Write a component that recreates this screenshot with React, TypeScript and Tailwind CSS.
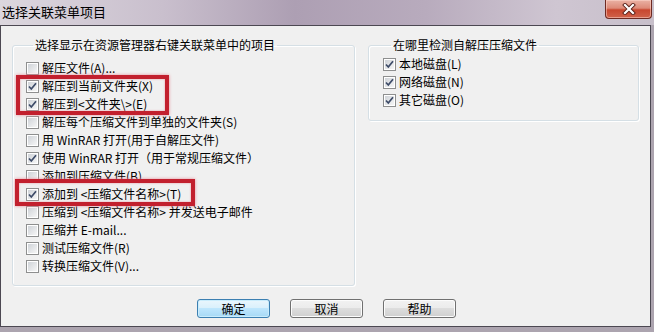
import React from "react";

type Item = { label: string; checked: boolean };

const leftItems: Item[] = [
  { label: "解压文件(A)...", checked: false },
  { label: "解压到当前文件夹(X)", checked: true },
  { label: "解压到<文件夹\\>(E)", checked: true },
  { label: "解压每个压缩文件到单独的文件夹(S)", checked: false },
  { label: "用 WinRAR 打开(用于自解压文件)", checked: false },
  { label: "使用 WinRAR 打开（用于常规压缩文件）", checked: true },
  { label: "添加到压缩文件(B)...", checked: false },
  { label: "添加到 <压缩文件名称>(T)", checked: true },
  { label: "压缩到 <压缩文件名称> 并发送电子邮件", checked: false },
  { label: "压缩并 E-mail...", checked: false },
  { label: "测试压缩文件(R)", checked: false },
  { label: "转换压缩文件(V)...", checked: false },
];

const rightItems: Item[] = [
  { label: "本地磁盘(L)", checked: true },
  { label: "网络磁盘(N)", checked: true },
  { label: "其它磁盘(O)", checked: true },
];

function CheckBox({ checked }: { checked: boolean }) {
  return (
    <span className="relative flex h-[13px] w-[13px] shrink-0 items-center justify-center border border-[#8e8f8f] bg-white">
      <span className="h-[9px] w-[9px] bg-gradient-to-br from-[#cfd3d8] to-[#f6f6f6]" />
      {checked && (
        <svg className="absolute inset-0" width="11" height="11" viewBox="0 0 11 11">
          <path d="M2 5.5 L4.3 8 L9 2.2" fill="none" stroke="#3d4b68" strokeWidth="1.7" />
        </svg>
      )}
    </span>
  );
}

function Row({ item }: { item: Item }) {
  return (
    <div className="flex h-[18px] items-center gap-[3px] whitespace-pre text-[12px] text-black">
      <CheckBox checked={item.checked} />
      <span>{item.label}</span>
    </div>
  );
}

function Button({ label, primary }: { label: string; primary?: boolean }) {
  return (
    <button
      className={
        primary
          ? "flex h-[19px] w-[73px] items-center justify-center rounded-[3px] border border-[#3c7fb1] bg-[linear-gradient(#eaf6fd_0%,#d9f0fc_50%,#bee6fd_50%,#a7d9f5_100%)] text-[12px] text-black shadow-[inset_0_0_0_1px_#c9ecfc]"
          : "flex h-[19px] w-[73px] items-center justify-center rounded-[3px] border border-[#707070] bg-[linear-gradient(#f2f2f2_0%,#ebebeb_50%,#dddddd_50%,#cfcfcf_100%)] text-[12px] text-black shadow-[inset_0_0_0_1px_#fcfcfc]"
      }
    >
      {label}
    </button>
  );
}

export default function App() {
  return (
    <div
      className="flex h-[332px] w-[654px] flex-col overflow-hidden bg-[#aca4af]"
      style={{ fontFamily: '"Noto Sans CJK SC", "Noto Sans", sans-serif' }}
    >
      {/* title bar */}
      <div className="flex h-[25px] shrink-0 items-start justify-between bg-[linear-gradient(90deg,#dcd7de_0%,#c9bfcd_25%,#ad9fb3_45%,#b8abbd_65%,#cfc6d2_85%,#c7bfca_100%)]">
        <span className="pl-[2px] pt-[3px] text-[13px] leading-[18px] text-black">选择关联菜单项目</span>
        <div className="mr-[2px] flex h-[19px] w-[47px] items-center justify-center rounded-b-[4px] border border-t-0 border-[#6e2a22] bg-[linear-gradient(#eab2a4_0%,#dd8a78_45%,#c8472f_55%,#d0624a_100%)] shadow-[inset_0_0_0_1px_rgba(255,220,210,0.5)]">
          <svg width="14" height="12" viewBox="0 0 14 12">
            <path d="M3 2 L11 10 M11 2 L3 10" stroke="#5a2018" strokeWidth="4" strokeLinecap="square" />
            <path d="M3 2 L11 10 M11 2 L3 10" stroke="#ffffff" strokeWidth="2.2" strokeLinecap="square" />
          </svg>
        </div>
      </div>

      {/* client area */}
      <div className="relative flex h-[302px] w-[651px] shrink-0 flex-col border border-[#4c4852] bg-[#f0f0f0]">
        <div className="flex items-start">
          <fieldset className="ml-[11px] mt-[11px] h-[249px] w-[343px] rounded-[3px] border border-[#d5dfe5] pl-[13px] pt-[6px] shadow-[inset_1px_1px_0_#ffffff,1px_1px_0_#ffffff]">
            <legend className="ml-[7px] px-[2px] text-[12px] leading-[16px] text-black">
              选择显示在资源管理器右键关联菜单中的项目
            </legend>
            {leftItems.map((it) => (
              <Row key={it.label} item={it} />
            ))}
          </fieldset>
          <fieldset className="ml-[13px] mt-[11px] h-[84px] w-[271px] rounded-[3px] border border-[#d5dfe5] pl-[14px] pt-[2px] shadow-[inset_1px_1px_0_#ffffff,1px_1px_0_#ffffff]">
            <legend className="ml-[8px] px-[2px] text-[12px] leading-[16px] text-black">
              在哪里检测自解压压缩文件
            </legend>
            {rightItems.map((it) => (
              <Row key={it.label} item={it} />
            ))}
          </fieldset>
        </div>

        <div className="mt-[13px] flex gap-[20px] pl-[196px]">
          <Button label="确定" primary />
          <Button label="取消" />
          <Button label="帮助" />
        </div>

        {/* red highlight frames */}
        <div className="absolute left-[15px] top-[49px] h-[40px] w-[153px] border-[4px] border-[#c2202e] shadow-[0_0_3px_#e88a96,inset_0_0_2px_#e88a96]" />
        <div className="absolute left-[14px] top-[153px] h-[27px] w-[180px] border-[4px] border-[#c2202e] shadow-[0_0_3px_#e88a96,inset_0_0_2px_#e88a96]" />
      </div>
    </div>
  );
}
